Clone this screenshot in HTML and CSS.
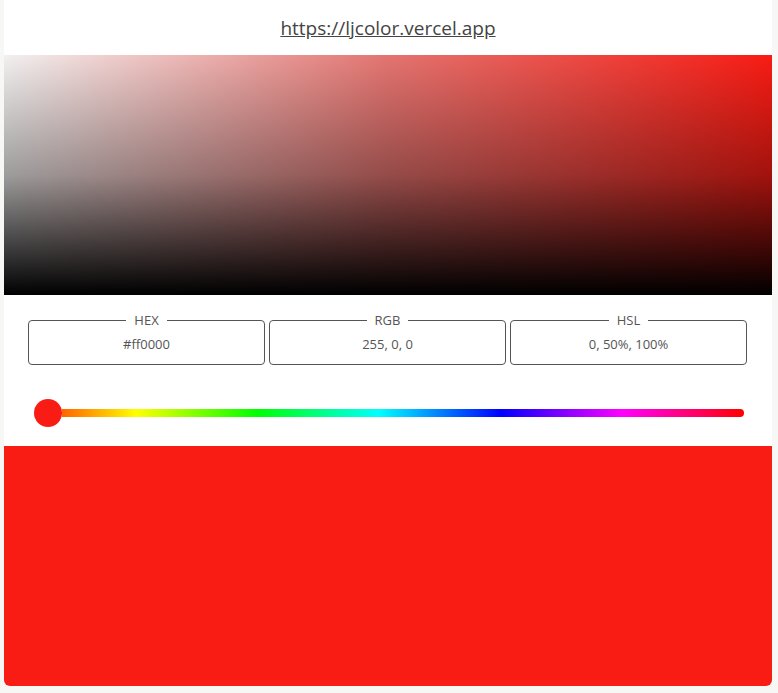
FILE: index.html
```html
<!DOCTYPE html>
<html>
<head>
<meta charset="utf-8">
<link rel="stylesheet" href="styles.css">
</head>
<body>
<div class="card">
  <header class="head"><a class="url" href="#">https://ljcolor.vercel.app</a></header>
  <div class="sv"></div>
  <div class="fields">
    <fieldset class="field"><legend>HEX</legend><div class="val">#ff0000</div></fieldset>
    <fieldset class="field"><legend>RGB</legend><div class="val">255, 0, 0</div></fieldset>
    <fieldset class="field"><legend>HSL</legend><div class="val">0, 50%, 100%</div></fieldset>
  </div>
  <div class="slider">
    <div class="thumb"></div>
    <div class="track"></div>
  </div>
  <div class="preview"></div>
</div>
</body>
</html>
```
FILE: styles.css
```css
html, body { margin: 0; padding: 0; }
body {
  background: #f7f7f5;
  font-family: "Open Sans", "Noto Sans", sans-serif;
  color: #555;
}
.card {
  width: 768px;
  margin-left: 4px;
  background: #fff;
  border-radius: 0 0 6px 6px;
  overflow: hidden;
}
.head {
  height: 55px;
  display: flex;
  align-items: center;
  justify-content: center;
}
.url {
  font-size: 19px;
  color: #444;
  text-decoration: underline;
  line-height: 24px;
}
.sv {
  height: 240px;
  background:
    linear-gradient(to bottom, rgba(0,0,0,0) 0%, rgba(0,0,0,0.35) 50%, rgba(0,0,0,1) 100%),
    linear-gradient(to right, #f2f0f0 0%, #e47470 50%, #f81c14 100%);
}
.fields {
  display: grid;
  grid-template-columns: 237px 237px 237px;
  column-gap: 4px;
  padding: 16px 24px 0 24px;
}
.field {
  margin: 0;
  padding: 6px 0 11px 0;
  border: 1px solid #555;
  border-radius: 4px;
  min-width: 0;
}
.field legend {
  margin: 0 auto;
  padding: 0 8px;
  font-size: 13px;
  line-height: 18px;
  color: #555;
}
.val {
  text-align: center;
  font-size: 13px;
  line-height: 18px;
  color: #555;
}
.slider {
  display: flex;
  align-items: center;
  padding: 34px 28px 19px 30px;
}
.thumb {
  width: 28px;
  height: 28px;
  border-radius: 50%;
  background: #f81c14;
  flex: none;
}
.track {
  flex: 1;
  height: 8px;
  border-radius: 0 4px 4px 0;
  background: linear-gradient(to right,
    #ff0000 -48px, #ffff00 74px, #00ff00 195px, #00ffff 317px,
    #0000ff 439px, #ff00ff 560px, #ff0000 682px);
}
.preview {
  height: 240px;
  background: #f81c14;
}
```
